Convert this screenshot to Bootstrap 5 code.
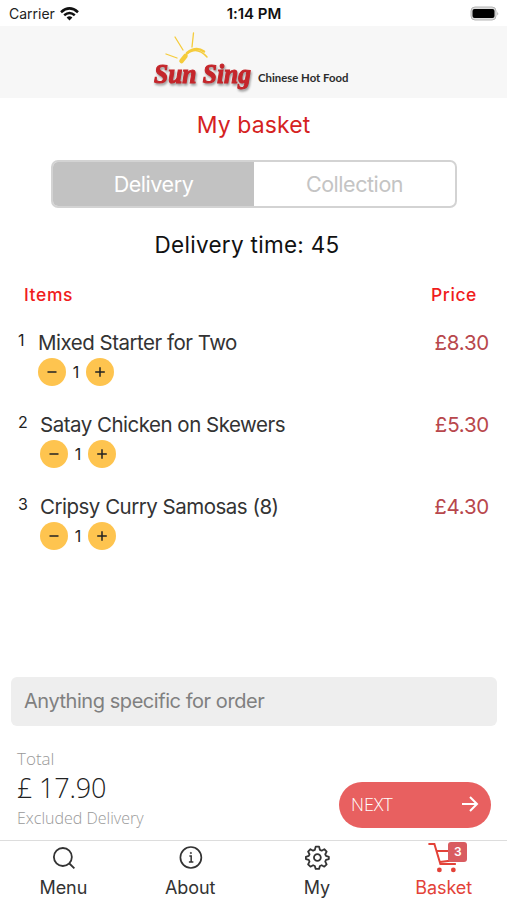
<!DOCTYPE html>
<html lang="en">
<head>
<meta charset="utf-8">
<meta name="viewport" content="width=device-width, initial-scale=1">
<title>My basket</title>
<link href="https://cdn.jsdelivr.net/npm/bootstrap@5.3.0/dist/css/bootstrap.min.css" rel="stylesheet">
<style>
body{font-family:Inter,"Liberation Sans",sans-serif;background:#fff;color:#333}
.app{height:900px;overflow:hidden}
.status{height:26px;font-size:14px;line-height:27px;padding:0 8px 0 9px;color:#222}
.status-time{font-size:15px;font-weight:600;color:#111;letter-spacing:-.05px}
.brand{height:72px;background:#f7f7f7}
.wordmark{filter:drop-shadow(1.5px 2px 1px #999)}
.page-title{height:62px;padding-top:11px;font-size:23px;line-height:32px;letter-spacing:.1px;color:#d5221f}
.segment{height:48px;width:406px;margin-left:51px;border:2px solid #d3d3d3;border-radius:7px;overflow:hidden;font-size:21.5px;letter-spacing:-.45px;color:#c4c4c4}
.segment .chosen{background:#c2c2c2;color:#fff}
.eta{height:73px;padding-top:21px;padding-right:13px;font-size:22.5px;line-height:31px;letter-spacing:.3px;color:#111}
.heads{height:48px;padding:2px 30px 0 24px;font-size:17.5px;line-height:24px;letter-spacing:.6px;color:#f01c1c;font-weight:450}
.line{height:82px;padding:0 18px;margin-top:-1px;margin-bottom:1px}
.idx{font-size:16px;line-height:24px;width:20px;color:#222}
.line + .line .idx{width:22px}
.dish{font-size:20.5px;line-height:30px;letter-spacing:-.5px}
.cost{font-size:20.5px;line-height:30px;letter-spacing:-.25px;color:#b8474c}
.step{width:28px;height:28px;background:#fec44f;color:#222}
.qty{width:20px;font-size:16px;color:#222}
.note{height:49px;margin:0 10px 0 11px;border-radius:6px;background:#eee;color:#808080;font-size:20px;line-height:28px;padding:0 0 2px 13px;letter-spacing:-.45px}
.foot{height:114px;padding:22px 16px 0 17px;font-family:"Open Sans","Noto Sans",sans-serif;font-weight:300}
.muted{color:#999}
.total{font-size:17px;line-height:22px}
.extra{font-size:16px;line-height:25px}
.sum{font-size:27px;line-height:36px;color:#222;letter-spacing:-.2px}
.next{width:152px;height:46px;margin-top:34px;background:#e86060;color:#fff;font-size:18px;padding:0 12px;font-weight:300;letter-spacing:-.1px}
.next svg{margin-top:-3px}
.next span{margin-top:-2px}
.tabs{height:60px;border-top:1px solid #ddd;font-size:18px;line-height:25px;letter-spacing:-.1px}
.tabs > div{width:126.8px;padding-top:2px}
.tabs svg{display:block;height:32px}
.tabs .current{color:#e34238}
.pill{left:68px;top:1px;width:19px;height:20px;background:#d95c60;border-radius:3px;color:#fff;font-size:12px;font-weight:600;line-height:20px}
</style>
<script src="https://cdn.jsdelivr.net/npm/bootstrap@5.3.0/dist/js/bootstrap.bundle.min.js"></script>
</head>
<body>
<svg width="0" height="0" class="position-absolute"><defs>
<path id="minus" d="M9.5 14h9" stroke="currentColor" stroke-width="1.5"/>
<path id="plus" d="M9.2 14h9.6M14 9.2v9.6" stroke="currentColor" stroke-width="1.5"/>
</defs></svg>
<div class="app d-flex flex-column">
<div class="status row g-0">
<div class="col d-flex align-items-center">Carrier
<svg class="ms-1" width="21" height="16" viewBox="0 0 21 16" fill="none" stroke="#111"><path d="M2 6.2Q10.5-1.4 19 6.2" stroke-width="2.6"/><path d="M5.2 9.2Q10.5 4.7 15.8 9.2" stroke-width="2.5"/><path d="M7.6 11.4Q10.5 9.2 13.4 11.4L10.5 14.5Z" fill="#111" stroke="none"/></svg></div>
<div class="col status-time text-center">1:14 PM</div>
<div class="col d-flex align-items-center justify-content-end"><svg width="30" height="16" viewBox="0 0 30 16"><rect x="2" y="1" width="25" height="13" rx="4" fill="#ddd" stroke="#b5b5b5"/><rect x="3.5" y="3" width="22" height="9" rx="2" fill="#000"/><path d="M28.3 5.5v4q1.7-2 0-4" fill="#aaa"/></svg></div>
</div>
<header class="brand">
<svg class="d-block" width="507" height="72" viewBox="0 0 507 72">
<g fill="none" stroke="#f5cc3c" stroke-linecap="round"><path d="M175 11l8 13M193.5 7l-1.5 14M166 28l11 4" stroke-width="1.3"/><path d="M181.5 35l4-5" stroke-width="4.5"/><path d="M184 31Q195 18 207 31" stroke-width="1.5"/><path d="M187 27Q196 20 204 25.5" stroke-width="2.5"/></g>
<text class="wordmark" x="154" y="56.5" font-family="'Liberation Serif',serif" font-weight="700" font-style="italic" font-size="28" textLength="97" lengthAdjust="spacingAndGlyphs" fill="#c5262b" stroke="#c5262b" stroke-width="1.1">Sun Sing</text>
<text x="258" y="55.5" font-family="Lato,sans-serif" font-weight="700" font-size="11.8" textLength="90.5" lengthAdjust="spacingAndGlyphs" fill="#2c2c2c">Chinese Hot Food</text>
</svg>
</header>
<h1 class="page-title m-0 fw-normal text-center">My basket</h1>
<div class="segment d-flex flex-shrink-0">
<div class="chosen w-50 d-flex align-items-center justify-content-center">Delivery</div>
<div class="w-50 d-flex align-items-center justify-content-center">Collection</div>
</div>
<div class="eta text-center">Delivery time: 45</div>
<div class="heads d-flex justify-content-between"><span>Items</span><span>Price</span></div>
<main class="flex-grow-1">
<div class="line d-flex"><div class="idx">1</div><div class="flex-grow-1"><div class="dish">Mixed Starter for Two</div><div class="d-flex align-items-center"><svg class="step rounded-circle"><use href="#minus"/></svg><span class="qty text-center">1</span><svg class="step rounded-circle"><use href="#plus"/></svg></div></div><div class="cost">£8.30</div></div>
<div class="line d-flex"><div class="idx">2</div><div class="flex-grow-1"><div class="dish">Satay Chicken on Skewers</div><div class="d-flex align-items-center"><svg class="step rounded-circle"><use href="#minus"/></svg><span class="qty text-center">1</span><svg class="step rounded-circle"><use href="#plus"/></svg></div></div><div class="cost">£5.30</div></div>
<div class="line d-flex"><div class="idx">3</div><div class="flex-grow-1"><div class="dish">Cripsy Curry Samosas (8)</div><div class="d-flex align-items-center"><svg class="step rounded-circle"><use href="#minus"/></svg><span class="qty text-center">1</span><svg class="step rounded-circle"><use href="#plus"/></svg></div></div><div class="cost">£4.30</div></div>
</main>
<div class="note d-flex align-items-center flex-shrink-0">Anything specific for order</div>
<div class="foot d-flex justify-content-between flex-shrink-0">
<div><div class="muted total">Total</div><div class="sum">£ 17.90</div><div class="muted extra">Excluded Delivery</div></div>
<div class="next rounded-pill d-flex align-items-center justify-content-between"><span>NEXT</span>
<svg width="18" height="18" viewBox="0 0 18 18" fill="none" stroke="#fff" stroke-width="2"><path d="M1 9h15M9 2l7 7-7 7"/></svg></div>
</div>
<nav class="tabs d-flex flex-shrink-0 text-center">
<div><svg class="w-100" viewBox="0 0 127 32" fill="none" stroke="#333" stroke-width="1.8"><circle cx="63" cy="14" r="9"/><path d="M69.5 20.5l5 5"/></svg><div class="tab-text">Menu</div></div>
<div><svg class="w-100" viewBox="0 0 127 32" fill="none" stroke="#333" stroke-width="1.7"><circle cx="64" cy="14.5" r="10.5"/><path d="M62.5 13h1.8v6M62 19h4.5" stroke-width="1.5"/><circle cx="64" cy="10" r=".7" fill="#333" stroke-width=".6"/></svg><div class="tab-text">About</div></div>
<div><svg class="w-100" viewBox="0 0 127 32" fill="none" stroke="#333" stroke-width="1.9" stroke-linejoin="round"><g transform="translate(63.5 14.5) scale(.95)"><circle r="3.6"/><path d="M-1.8-11.5h3.6l.9 3.5 1.8.8 2.8-1.5 2.5 2.5-1.5 2.8.8 1.8 3 .9v2.4l-3 .9-.8 1.8 1.5 2.8-2.5 2.5-2.8-1.5-1.8.8-.9 3h-3.6l-.9-3-1.8-.8-2.8 1.5-2.5-2.5 1.5-2.8-.8-1.8-3-.9v-2.4l3-.9.8-1.8-1.5-2.8 2.5-2.5 2.8 1.5 1.8-.8z"/></g></svg><div class="tab-text">My</div></div>
<div class="current position-relative"><svg class="w-100" viewBox="0 0 127 32" fill="none" stroke="#e34238" stroke-width="2"><path d="M48.5 1h6l6 20H76M56.5 8H79l-3 9-16 2"/><circle cx="59.5" cy="27" r="2.4" fill="#e34238" stroke="none"/><circle cx="73.5" cy="27" r="2.4" fill="#e34238" stroke="none"/></svg><span class="pill position-absolute">3</span><div class="tab-text">Basket</div></div>
</nav>
</div>
</body>
</html>
